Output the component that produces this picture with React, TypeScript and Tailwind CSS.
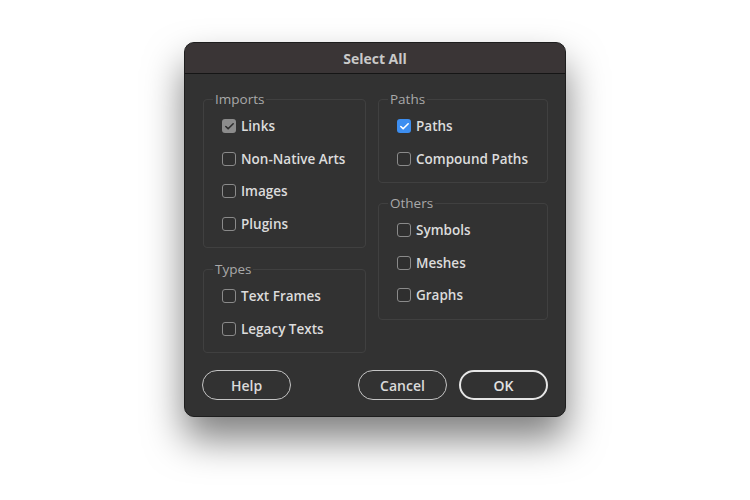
import { Check } from "lucide-react";

/* ================= TYPES ================= */

type Mark = "none" | "gray" | "blue";

interface Option {
  label: string;
  mark: Mark;
}

interface Group {
  title: string;
  options: Option[];
}

/* ================= DATA ================= */

const leftGroups: Group[] = [
  {
    title: "Imports",
    options: [
      { label: "Links", mark: "gray" },
      { label: "Non-Native Arts", mark: "none" },
      { label: "Images", mark: "none" },
      { label: "Plugins", mark: "none" },
    ],
  },
  {
    title: "Types",
    options: [
      { label: "Text Frames", mark: "none" },
      { label: "Legacy Texts", mark: "none" },
    ],
  },
];

const rightGroups: Group[] = [
  {
    title: "Paths",
    options: [
      { label: "Paths", mark: "blue" },
      { label: "Compound Paths", mark: "none" },
    ],
  },
  {
    title: "Others",
    options: [
      { label: "Symbols", mark: "none" },
      { label: "Meshes", mark: "none" },
      { label: "Graphs", mark: "none" },
    ],
  },
];

/* ================= PARTS ================= */

function Box({ mark }: { mark: Mark }) {
  if (mark === "blue") {
    return (
      <span className="w-[14px] h-[14px] rounded-[3px] bg-[#3d8ef0] flex items-center justify-center">
        <Check size={11} strokeWidth={3.5} className="text-white" />
      </span>
    );
  }
  if (mark === "gray") {
    return (
      <span className="w-[14px] h-[14px] rounded-[3px] bg-[#8c8c8c] flex items-center justify-center">
        <Check size={11} strokeWidth={3.5} className="text-[#2e2e2e]" />
      </span>
    );
  }
  return (
    <span className="w-[14px] h-[14px] rounded-[3px] border border-[#8a8a8a] bg-[#2f2f2f]" />
  );
}

function GroupBox({ group }: { group: Group }) {
  return (
    <fieldset className="border border-[#404040] rounded-[4px] pt-[4px] pb-[7px]">
      <legend className="ml-[9px] px-[2px] text-[13.5px] leading-[14px] text-[#a9a9a9]">
        {group.title}
      </legend>
      {group.options.map((opt) => (
        <div
          key={opt.label}
          className="h-[32.5px] pl-[18px] flex items-center gap-[5px]"
        >
          <Box mark={opt.mark} />
          <span className="text-[13.5px] font-semibold text-[#dcdcdc]">
            {opt.label}
          </span>
        </div>
      ))}
    </fieldset>
  );
}

function Pill({ label, primary }: { label: string; primary?: boolean }) {
  return (
    <button
      className={
        primary
          ? "w-[89px] h-[30px] rounded-full border-2 border-[#e6e6e6] text-[14px] font-semibold text-[#e2e2e2]"
          : "w-[89px] h-[30px] rounded-full border-[1.5px] border-[#c4c4c4] text-[14px] font-semibold text-[#dadada]"
      }
    >
      {label}
    </button>
  );
}

/* ================= PAGE ================= */

export default function App() {
  return (
    <div
      className="w-[750px] h-[500px] bg-white flex justify-center pt-[42px]"
      style={{ fontFamily: '"Open Sans", "Liberation Sans", sans-serif' }}
    >
      <div className="w-[382px] h-[375px] rounded-[10px] bg-[#323232] border border-[#1e1e1e] overflow-hidden flex flex-col shadow-[0_22px_38px_rgba(0,0,0,0.5)]">
        {/* Title bar */}
        <div className="h-[31px] bg-[#3a3536] border-b border-[#151515] flex items-center justify-center">
          <span className="text-[14px] font-bold text-[#c9c9c9]">Select All</span>
        </div>

        {/* Groups */}
        <div className="flex gap-[12px] pl-[18px] pr-[17px] pt-[18px]">
          <div className="w-[163px] flex flex-col gap-[14px]">
            {leftGroups.map((g) => (
              <GroupBox key={g.title} group={g} />
            ))}
          </div>
          <div className="w-[170px] flex flex-col gap-[13px]">
            {rightGroups.map((g) => (
              <GroupBox key={g.title} group={g} />
            ))}
          </div>
        </div>

        {/* Buttons */}
        <div className="mt-auto flex items-center pl-[17px] pr-[17px] pb-[16px]">
          <Pill label="Help" />
          <div className="flex-1" />
          <div className="flex gap-[12px]">
            <Pill label="Cancel" />
            <Pill label="OK" primary />
          </div>
        </div>
      </div>
    </div>
  );
}
